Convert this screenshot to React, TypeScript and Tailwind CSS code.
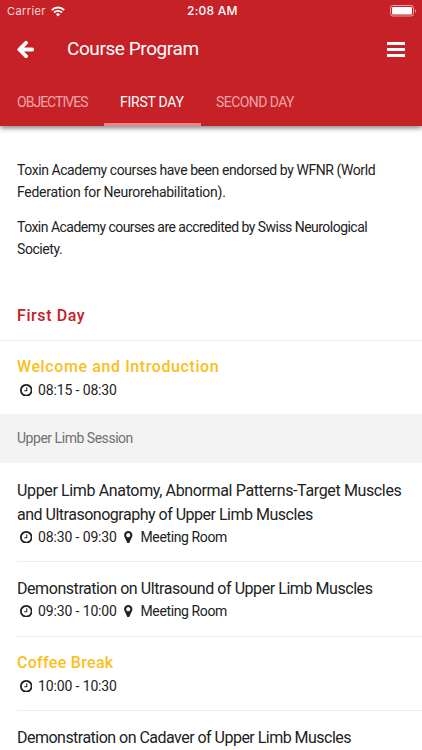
import React from "react";

const itemText = "whitespace-nowrap text-[16px] leading-[24px] text-[#222]";

function Clock() {
  return (
    <svg viewBox="0 128 1536 1536" className="ml-[2.5px] h-[12.5px] w-[12.5px] shrink-0 fill-current">
      <path d="M896 544v448q0 14-9 23t-23 9h-320q-14 0-23-9t-9-23v-64q0-14 9-23t23-9h224v-352q0-14 9-23t23-9h64q14 0 23 9t9 23zm416 352q0-148-73-273t-198-198-273-73-273 73-198 198-73 273 73 273 198 198 273 73 273-73 198-198 73-273zm224 0q0 209-103 385.5t-279.5 279.5-385.5 103-385.5-103-279.5-279.5-103-385.5 103-385.5 279.5-279.5 385.5-103 385.5 103 279.5 279.5 103 385.5z" />
    </svg>
  );
}

function Pin() {
  return (
    <svg viewBox="0 128 1024 1536" className="h-[12.5px] w-[8.5px] shrink-0 fill-current">
      <path d="M768 640q0-106-75-181t-181-75-181 75-75 181 75 181 181 75 181-75 75-181zm256 0q0 109-33 179l-364 774q-16 33-47.5 52t-67.5 19-67.5-19-46.5-52l-365-774q-33-70-33-179 0-212 150-362t362-150 362 150 150 362z" />
    </svg>
  );
}

function Meta({ time, room }: { time: string; room?: string }) {
  return (
    <div className="flex h-[22px] items-center text-[14px] tracking-normal text-[#222]">
      <Clock />
      <span className="ml-[6px] w-[86px] whitespace-nowrap tracking-[-0.13px]">{time}</span>
      {room && <Pin />}
      {room && <span className="ml-[8px] whitespace-nowrap tracking-[-0.38px]">{room}</span>}
    </div>
  );
}

export default function App() {
  return (
    <div className="h-[750px] w-[422px] overflow-hidden bg-white font-['Roboto','Liberation_Sans',sans-serif]">
      <header className="relative h-[126px] bg-[#c62127] text-white shadow-[0_2px_5px_rgba(0,0,0,0.5)]">
        <div className="flex h-[22px] items-center pl-[7px] pr-[5px] font-['Inter',sans-serif] text-[11px]">
          <div className="flex w-[180px] items-center gap-[5px]">
            <span className="tracking-[0.4px] text-[#fbdcdd]">Carrier</span>
            <svg viewBox="0 0 14 11" className="h-[11px] w-[14px]" fill="none" stroke="white" strokeWidth="1.9">
              <path d="M.8 4.1a8.8 8.8 0 0 1 12.4 0M3 6.5a5.7 5.7 0 0 1 8 0" />
              <path d="M7 10.4 4.9 8.3a3 3 0 0 1 4.2 0z" fill="white" stroke="none" />
            </svg>
          </div>
          <span className="whitespace-nowrap text-[12px] font-medium tracking-[0.25px]">2:08 AM</span>
          <svg viewBox="0 0 27 12" className="ml-auto h-[12px] w-[27px]">
            <rect x=".5" y=".5" width="23" height="10.5" rx="2.5" fill="none" stroke="#ed9fa2" />
            <rect x="2" y="2" width="20" height="7.5" rx="1" fill="white" />
            <path d="M25 4q2 2 0 4z" fill="#ed9fa2" />
          </svg>
        </div>
        <div className="flex h-[54px] items-center px-[17px]">
          <svg viewBox="0 0 18 18" className="h-[18px] w-[18px]" fill="none" stroke="white" strokeWidth="3.8" strokeLinecap="round" strokeLinejoin="round">
            <path d="M9 2.8 2.3 9.5 9 16.2M3 9.5h12.2" />
          </svg>
          <h1 className="ml-[32px] whitespace-nowrap text-[19px] tracking-[-0.42px]">Course Program</h1>
          <div className="ml-auto flex w-[18px] flex-col gap-[3px]">
            <div className="h-[3px] bg-white" />
            <div className="h-[3px] bg-white" />
            <div className="h-[3px] bg-white" />
          </div>
        </div>
        <nav className="flex h-[50px] whitespace-nowrap text-[14px] text-[#f0a5a8]">
          <div className="flex w-[104px] items-center pl-[17px] pt-[3px]"><span className="tracking-[-0.98px]">OBJECTIVES</span></div>
          <div className="flex w-[97px] items-center border-b-[3px] border-[#e9878b] pl-[16px] pt-[6px] text-white"><span className="tracking-[-0.25px]">FIRST DAY</span></div>
          <div className="flex items-center pl-[15px] pt-[3px]"><span className="tracking-[-0.57px]">SECOND DAY</span></div>
        </nav>
      </header>
      <main>
        <div className="flex h-[214px] flex-col whitespace-nowrap pl-[17px] pt-[33px] text-[14px] leading-[22px] text-[#222]">
          <p className="tracking-[-0.43px]">Toxin Academy courses have been endorsed by WFNR (World</p>
          <p className="tracking-[-0.27px]">Federation for Neurorehabilitation).</p>
          <p className="mt-[13px] tracking-[-0.53px]">Toxin Academy courses are accredited by Swiss Neurological</p>
          <p className="tracking-[-0.42px]">Society.</p>
          <h2 className="mt-[45px] text-[16px] font-medium tracking-[0.6px] text-[#c62127]">First Day</h2>
        </div>
        <section className="h-[74px] border-t border-[#eee] pl-[17px] pt-[13px]">
          <h3 className="h-[25px] text-[16px] font-medium leading-[25px] tracking-[0.6px] text-[#fac020]">Welcome and Introduction</h3>
          <Meta time="08:15 - 08:30" />
        </section>
        <div className="flex h-[49px] items-center bg-[#f3f3f3] pl-[17px] text-[14px] text-[#717171]"><span className="tracking-[-0.47px]">Upper Limb Session</span></div>
        <section className={`${itemText} ml-[17px] h-[99px] border-b border-[#eee] pt-[16px]`}>
          <p className="tracking-[-0.36px]">Upper Limb Anatomy, Abnormal Patterns-Target Muscles</p>
          <p className="-mb-px tracking-[-0.49px]">and Ultrasonography of Upper Limb Muscles</p>
          <Meta time="08:30 - 09:30" room="Meeting Room" />
        </section>
        <section className={`${itemText} ml-[17px] h-[75px] border-b border-[#eee] pt-[15px]`}>
          <p className="-mb-px tracking-[-0.44px]">Demonstration on Ultrasound of Upper Limb Muscles</p>
          <Meta time="09:30 - 10:00" room="Meeting Room" />
        </section>
        <section className="ml-[17px] h-[74px] border-b border-[#eee] pt-[13px]">
          <h3 className="h-[25px] text-[16px] font-medium leading-[25px] tracking-[0.3px] text-[#fac020]">Coffee Break</h3>
          <Meta time="10:00 - 10:30" />
        </section>
        <section className={`${itemText} ml-[17px] pt-[15px]`}>
          <p className="tracking-[-0.52px]">Demonstration on Cadaver of Upper Limb Muscles</p>
        </section>
      </main>
    </div>
  );
}
